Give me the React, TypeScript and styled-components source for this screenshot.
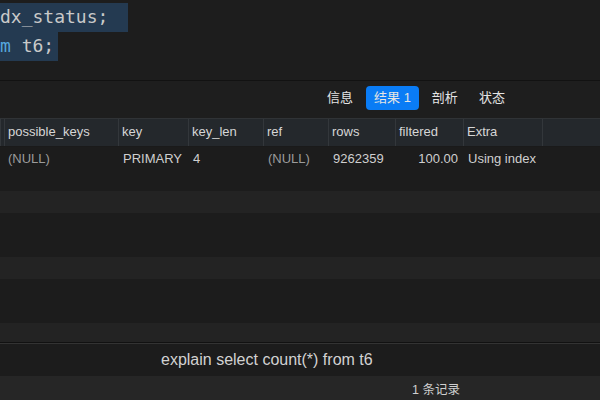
import React from "react";
import styled, { createGlobalStyle } from "styled-components";

const GlobalStyle = createGlobalStyle`
  html, body {
    margin: 0;
    padding: 0;
    background: #1c1c1c;
  }
  body {
    font-family: "Liberation Sans", "Noto Sans CJK SC", sans-serif;
    overflow: hidden;
  }
`;

const Window = styled.div`
  width: 600px;
  height: 400px;
  display: flex;
  flex-direction: column;
  background: #1c1c1c;
  overflow: hidden;
`;

const Editor = styled.div`
  height: 80px;
  padding-top: 3px;
  box-sizing: border-box;
  background: #1d1d1d;
  font-family: "DejaVu Sans Mono", "Liberation Mono", monospace;
  font-size: 18px;
  color: #c9c9c9;
`;

const CodeLine = styled.div<{ $width: number }>`
  width: ${({ $width }) => $width}px;
  height: 29px;
  line-height: 28px;
  background: #243a51;
  white-space: pre;
`;

const Keyword = styled.span`
  color: #56a6dc;
`;

const TabBar = styled.div`
  height: 38px;
  box-sizing: border-box;
  padding-bottom: 4px;
  border-top: 1px solid #121212;
  background: #1e1e1e;
  display: flex;
  align-items: center;
  padding-left: 319px;
  gap: 5px;
`;

const Tab = styled.div<{ $active?: boolean }>`
  height: 24px;
  line-height: 24px;
  padding: 0 8px;
  border-radius: 4px;
  font-size: 13px;
  color: #e4e4e4;
  background: ${({ $active }) => ($active ? "#0a7cf5" : "transparent")};
`;

const Grid = styled.div`
  flex: 1;
  display: flex;
  flex-direction: column;
  overflow: hidden;
`;

const HeaderRow = styled.div`
  display: flex;
  height: 29px;
  flex-shrink: 0;
  background: #24282c;
  border-top: 1px solid #303336;
  border-bottom: 1px solid #1a1a1a;
  box-sizing: border-box;
`;

const Row = styled.div<{ $striped?: boolean }>`
  display: flex;
  height: 22px;
  flex-shrink: 0;
  background: ${({ $striped }) => ($striped ? "#232323" : "#1c1c1c")};
`;

const HeadCell = styled.div<{ $w: number }>`
  width: ${({ $w }) => $w}px;
  flex-shrink: 0;
  box-sizing: border-box;
  padding-left: 3px;
  font-size: 13px;
  line-height: 26px;
  color: #d6d6d6;
  border-left: 1px solid #33373b;
  white-space: nowrap;
`;

const Cell = styled.div<{ $w: number; $muted?: boolean; $right?: boolean; $pad?: number }>`
  width: ${({ $w }) => $w}px;
  flex-shrink: 0;
  box-sizing: border-box;
  padding: 1px 5px 0 ${({ $pad }) => $pad ?? 5}px;
  font-size: 13px;
  line-height: 22px;
  color: ${({ $muted }) => ($muted ? "#9b9b9b" : "#cfcfcf")};
  text-align: ${({ $right }) => ($right ? "right" : "left")};
  white-space: nowrap;
`;

const QueryBar = styled.div`
  height: 33px;
  border-top: 1px solid #111;
  box-shadow: inset 0 1px 0 #333;
  background: #1c1c1c;
  display: flex;
  align-items: center;
  padding-left: 161px;
  font-size: 16px;
  color: #d2d2d2;
`;

const StatusBar = styled.div`
  height: 24px;
  background: #262626;
  display: flex;
  align-items: center;
  padding-left: 412px;
  font-size: 12.5px;
  color: #cfcfcf;
`;

const columns = [
  { name: "", w: 4 },
  { name: "possible_keys", w: 114 },
  { name: "key", w: 70 },
  { name: "key_len", w: 75 },
  { name: "ref", w: 65 },
  { name: "rows", w: 67 },
  { name: "filtered", w: 68 },
  { name: "Extra", w: 79 },
  { name: "", w: 60 },
];

const stripes = [false, true, false, false, true, false, false, true];

export default function App() {
  return (
    <Window>
      <GlobalStyle />
      <Editor>
        <CodeLine $width={128}>dx_status;</CodeLine>
        <CodeLine $width={58}>
          <Keyword>m</Keyword> t6;
        </CodeLine>
      </Editor>

      <TabBar>
        <Tab>信息</Tab>
        <Tab $active>结果 1</Tab>
        <Tab>剖析</Tab>
        <Tab>状态</Tab>
      </TabBar>

      <Grid>
        <HeaderRow>
          {columns.map((c, i) => (
            <HeadCell key={i} $w={c.w}>
              {c.name}
            </HeadCell>
          ))}
        </HeaderRow>
        <Row>
          <Cell $w={118} $pad={8} $muted>(NULL)</Cell>
          <Cell $w={70}>PRIMARY</Cell>
          <Cell $w={75}>4</Cell>
          <Cell $w={65} $muted>(NULL)</Cell>
          <Cell $w={67}>9262359</Cell>
          <Cell $w={68} $right>100.00</Cell>
          <Cell $w={79}>Using index</Cell>
        </Row>
        {stripes.map((s, i) => (
          <Row key={i} $striped={s} />
        ))}
      </Grid>

      <QueryBar>explain select count(*) from t6</QueryBar>
      <StatusBar>1 条记录</StatusBar>
    </Window>
  );
}
